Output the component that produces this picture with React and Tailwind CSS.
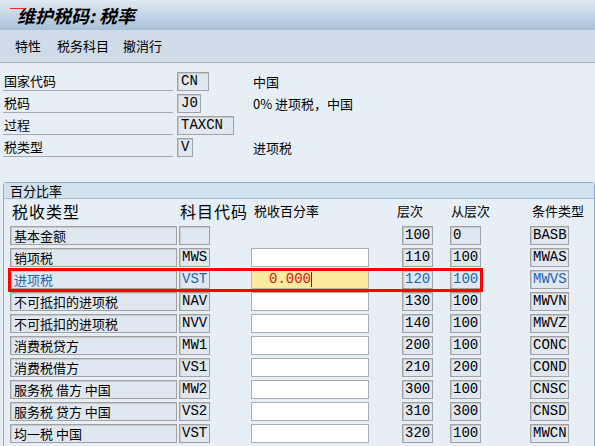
import React from 'react';

const CJK = "font-['Noto_Sans_CJK_SC','Noto_Sans',sans-serif]";
const MONO = "font-['Liberation_Mono','DejaVu_Sans_Mono',monospace]";

const HEADER_FIELDS = [
  { label: '国家代码', value: 'CN', width: 'w-[32px]', desc: '中国' },
  { label: '税码', value: 'J0', width: 'w-[24px]', desc: '0% 进项税，中国' },
  { label: '过程', value: 'TAXCN', width: 'w-[57px]', desc: '' },
  { label: '税类型', value: 'V', width: 'w-[16px]', desc: '进项税' },
];

const RATES = [
  { name: '基本金额', code: '', pct: null, level: '100', from: '0', cond: 'BASB' },
  { name: '销项税', code: 'MWS', pct: '', level: '110', from: '100', cond: 'MWAS' },
  { name: '进项税', code: 'VST', pct: '0.000', level: '120', from: '100', cond: 'MWVS', active: true },
  { name: '不可抵扣的进项税', code: 'NAV', pct: '', level: '130', from: '100', cond: 'MWVN' },
  { name: '不可抵扣的进项税', code: 'NVV', pct: '', level: '140', from: '100', cond: 'MWVZ' },
  { name: '消费税贷方', code: 'MW1', pct: '', level: '200', from: '100', cond: 'CONC' },
  { name: '消费税借方', code: 'VS1', pct: '', level: '210', from: '200', cond: 'COND' },
  { name: '服务税 借方 中国', code: 'MW2', pct: '', level: '300', from: '100', cond: 'CNSC' },
  { name: '服务税 贷方 中国', code: 'VS2', pct: '', level: '310', from: '300', cond: 'CNSD' },
  { name: '均一税 中国', code: 'VST', pct: '', level: '320', from: '100', cond: 'MWCN' },
];

// read-only SAP style box
const Box = ({ className = '', children, blue }) => (
  <div
    className={`shrink-0 h-[19px] flex items-center whitespace-nowrap bg-[#dfe8f1] border border-[#a2a2a2] shadow-[inset_1px_1px_0_#c9c9c9] ${blue ? 'text-[#1a64b0]' : 'text-black'} ${className}`}
  >
    {children}
  </div>
);

const RateRow = ({ row }) => (
  <div className="relative flex items-center h-[19px]">
    <Box className={`w-[167px] pl-[3px] text-[13px] ${CJK}`} blue={row.active}>
      {row.name}
    </Box>
    <Box className={`ml-[2px] w-[31px] pl-[2px] text-[14px] ${MONO}`} blue={row.active}>
      {row.code}
    </Box>
    {row.pct === null ? (
      <div className="shrink-0 ml-[41px] w-[118px]" />
    ) : (
      <div
        className={`shrink-0 ml-[41px] w-[118px] h-[19px] flex items-center border ${
          row.active ? 'bg-[#fcea9e] border-[#b8b8b8]' : 'bg-white border-[#a9aeb3]'
        }`}
      >
        {row.active && (
          <span className={`pl-[17px] text-[14px] text-[#d01818] ${MONO}`}>
            {row.pct}
            <span className="inline-block w-px h-[15px] bg-[#1d3a66] align-middle" />
          </span>
        )}
      </div>
    )}
    <Box className={`ml-[33px] w-[31px] pl-[2px] text-[14px] ${MONO}`} blue={row.active}>
      {row.level}
    </Box>
    <Box className={`ml-[17px] w-[31px] pl-[2px] text-[14px] ${MONO}`} blue={row.active}>
      {row.from}
    </Box>
    <Box className={`ml-[49px] w-[39px] pl-[2px] text-[14px] ${MONO}`} blue={row.active}>
      {row.cond}
    </Box>
    {row.active && (
      <div className="absolute left-[-2px] top-[-2px] w-[475px] h-[24px] border-[3px] border-[#ff0000]" />
    )}
  </div>
);

export default function App() {
  return (
    <div className={`w-[595px] h-[446px] overflow-hidden bg-[#e6eef6] ${CJK}`}>
      {/* title bar */}
      <div className="relative h-[30px] flex items-center pl-[17px] bg-gradient-to-b from-[#e2eaf3] to-[#a8c0d9]">
        <div className="absolute left-[10px] top-[8px] w-[15px] h-px bg-[#ff2a10]" />
        <span className="text-[18px] font-bold italic text-black">维护税码: 税率</span>
      </div>

      {/* toolbar */}
      <div className="h-[33px] flex items-center pl-[15px] bg-[#cfdbe7] border-b border-[#a5b3c1] text-[13px] text-black whitespace-nowrap">
        <span>特性</span>
        <span className="ml-[16px]">税务科目</span>
        <span className="ml-[14px]">撤消行</span>
      </div>

      {/* header fields */}
      <div className="pt-[9px] pl-[3px] flex flex-col gap-[3px]">
        {HEADER_FIELDS.map((f) => (
          <div key={f.label} className="flex items-center h-[19px] whitespace-nowrap">
            <div className="shrink-0 w-[170px] h-[19px] flex items-center pl-px border-b border-[#a3abb4] text-[13px]">
              {f.label}
            </div>
            <div className="shrink-0 ml-[4px] w-[76px]">
              <Box className={`${f.width} pl-[3px] text-[14px] ${MONO}`}>{f.value}</Box>
            </div>
            <span className="text-[13px]">{f.desc}</span>
          </div>
        ))}
      </div>

      {/* percentage group */}
      <div className="mt-[25px] ml-[3px] border border-[#95aac0] rounded-t-[3px] h-[300px]">
        <div className="h-[16px] flex items-center pl-[6px] bg-[#d3e0ed] border-b border-[#a9bccf] text-[13px]">
          百分比率
        </div>
        <div className="h-[24px] flex items-end pb-[1px] text-black whitespace-nowrap">
          <span className="shrink-0 ml-[8px] w-[168px] text-[16px] tracking-[1px] leading-[22px]">税收类型</span>
          <span className="shrink-0 w-[74px] text-[16px] tracking-[1px] leading-[22px]">科目代码</span>
          <span className="shrink-0 w-[143px] mb-[2px] text-[13px]">税收百分率</span>
          <span className="shrink-0 w-[54px] mb-[2px] text-[13px]">层次</span>
          <span className="shrink-0 w-[81px] mb-[2px] text-[13px]">从层次</span>
          <span className="shrink-0 mb-[2px] text-[13px]">条件类型</span>
        </div>
        <div className="pt-[3px] pl-[6px] flex flex-col gap-[3px]">
          {RATES.map((r, i) => (
            <RateRow key={i} row={r} />
          ))}
        </div>
      </div>
    </div>
  );
}
